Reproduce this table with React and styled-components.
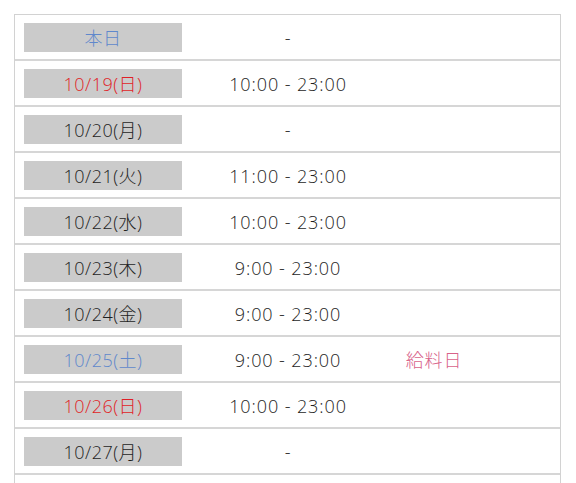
import styled, { createGlobalStyle } from 'styled-components';

const GlobalStyle = createGlobalStyle`
  html, body {
    margin: 0;
    padding: 0;
    background: #ffffff;
  }
  body {
    font-family: "Open Sans", "Noto Sans CJK JP", sans-serif;
    color: #222222;
  }
`;

const days = [
  { date: '本日', time: '-', tone: 'today' },
  { date: '10/19(日)', time: '10:00 - 23:00', tone: 'sun' },
  { date: '10/20(月)', time: '-' },
  { date: '10/21(火)', time: '11:00 - 23:00' },
  { date: '10/22(水)', time: '10:00 - 23:00' },
  { date: '10/23(木)', time: '9:00 - 23:00' },
  { date: '10/24(金)', time: '9:00 - 23:00' },
  { date: '10/25(土)', time: '9:00 - 23:00', tone: 'sat', note: '給料日' },
  { date: '10/26(日)', time: '10:00 - 23:00', tone: 'sun' },
  { date: '10/27(月)', time: '-' },
  { date: '10/28(火)', time: '-' },
];

const toneColor = {
  today: '#5f88cc',
  sun: '#e01f27',
  sat: '#5f88cc',
};

const App = () => {
  return (
    <Page>
      <GlobalStyle />
      <Schedule>
        {days.map((d) => (
          <Row key={d.date}>
            <DateLabel tone={d.tone}>{d.date}</DateLabel>
            <TimeCell>{d.time}</TimeCell>
            <NoteCell>{d.note}</NoteCell>
          </Row>
        ))}
      </Schedule>
    </Page>
  );
};

const Page = styled.div`
  height: 483px;
  overflow: hidden;
  padding: 14px 15px 0 14px;
  box-sizing: border-box;
`;

const Schedule = styled.div`
  border: 1px solid #d2d2d2;
  border-bottom: none;
`;

const Row = styled.div`
  display: grid;
  grid-template-columns: 158px 212px 80px 1fr;
  align-items: center;
  height: 46px;
  box-sizing: border-box;
  border-bottom: 2px solid #d6d6d6;
  padding: 8px 0 7px 9px;
`;

const Text = styled.div`
  font-size: 18px;
  font-weight: 300;
  letter-spacing: 0.9px;
  line-height: 1;
`;

const DateLabel = styled(Text)`
  height: 29px;
  background: #cbcbcb;
  display: flex;
  align-items: center;
  justify-content: center;
  letter-spacing: 0.5px;
  color: ${(p) => toneColor[p.tone] || '#1e1e1e'};
`;

const TimeCell = styled(Text)`
  text-align: center;
  color: #1e1e1e;
`;

const NoteCell = styled(Text)`
  text-align: center;
  color: #d8628a;
`;

export default App;
